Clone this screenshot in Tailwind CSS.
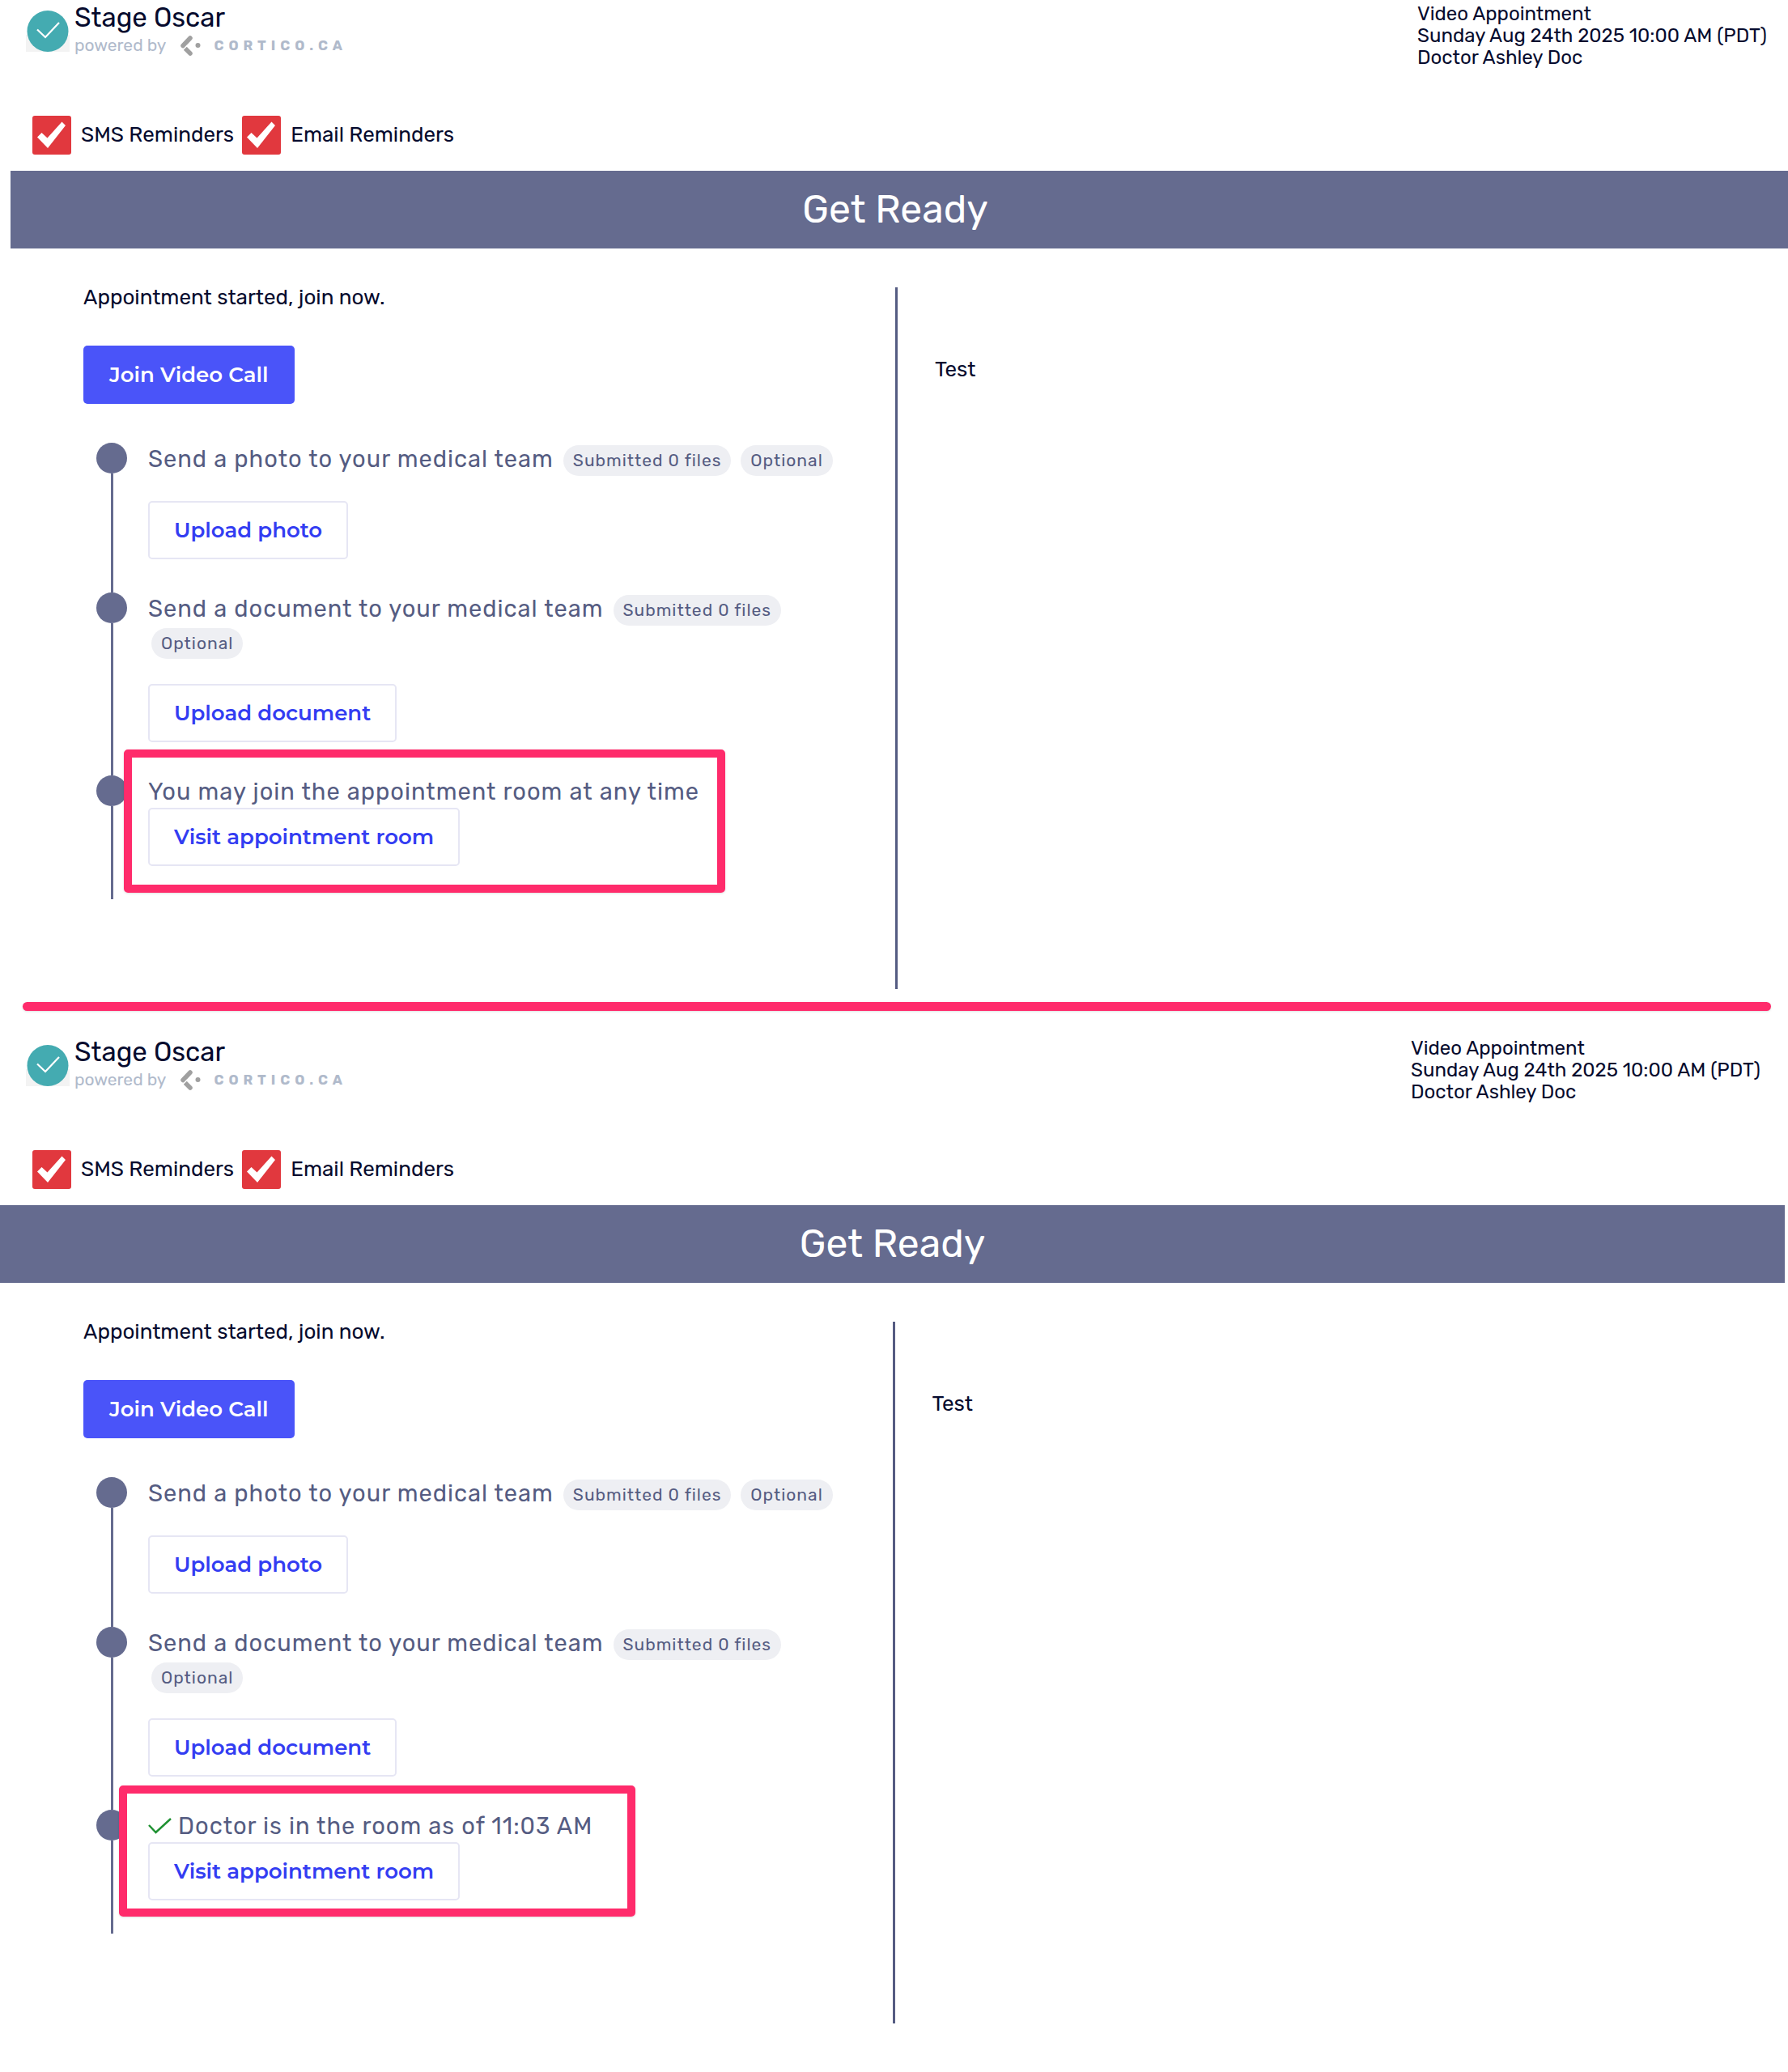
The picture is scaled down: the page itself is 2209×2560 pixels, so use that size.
<!DOCTYPE html>
<html lang="en">
<head>
  <meta charset="utf-8">
  <title>Video Appointment</title>
  <meta name="viewport" content="width=device-width, initial-scale=1">
  <script src="https://cdn.jsdelivr.net/npm/@tailwindcss/browser@4"></script>
</head>
<body class="bg-white text-[#060b2e] text-[26px] leading-[26px] font-[Rubik,Roboto,sans-serif]">

  <!-- before the doctor joins -->
  <section class="pl-[3px]">
    <header class="flex justify-between items-start pl-[29px] pr-[26px]">
      <div class="flex items-start pt-0.5">
        <svg class="w-[54px] h-[51px] mt-[11px] mr-1.5" viewBox="0 0 54 51" aria-hidden="true">
          <rect y="30" width="54" height="21" fill="#f3f3f3"/>
          <circle cx="27" cy="25.500" r="25.500" fill="#44abb1"/>
          <path d="M14 23.500 L24 33 L41 15" fill="none" stroke="#fff" stroke-width="2.200"/>
        </svg>
        <div>
          <h1 class="text-[33px] leading-10">Stage Oscar</h1>
          <div class="flex items-center text-[#b0bacb] text-[21px] leading-7">
            <span>powered by</span>
            <svg class="w-[26px] h-[26px] ml-[17px] mr-4" viewBox="0 0 26 26" aria-hidden="true">
              <path d="M4 13.500 L13 4" stroke="#a0a0a0" stroke-width="5.500" stroke-linecap="round"/>
              <path d="M7.500 17.500 L13 23" stroke="#a0a0a0" stroke-width="5.500" stroke-linecap="round"/>
              <path d="M3 19.500 L10 12.500" stroke="#fff" stroke-width="1.500"/>
              <circle cx="22.500" cy="13" r="3" fill="#a0a0a0"/>
            </svg>
            <span class="text-[17px] font-bold tracking-[6px]">CORTICO.CA</span>
          </div>
        </div>
      </div>
      <div class="pt-1 text-2xl leading-[27px]">
        <p>Video Appointment</p>
        <p>Sunday Aug 24th 2025 10:00 AM (PDT)</p>
        <p>Doctor Ashley Doc</p>
      </div>
    </header>

    <div class="flex gap-2.5 mt-[58px] pl-[37px]">
      <label class="flex items-center gap-3">
        <span class="grid">
          <input type="checkbox" checked class="appearance-none size-12 rounded-[3px] bg-[#e1383e] col-start-1 row-start-1">
          <svg class="size-12 col-start-1 row-start-1 pointer-events-none" viewBox="0 0 48 48" aria-hidden="true"><path d="M6 26.500 L11.500 21 L18.500 27.500 L36.500 7.500 L41 12 L19 40 Z" fill="#fff"/></svg>
        </span>
        SMS Reminders
      </label>
      <label class="flex items-center gap-3">
        <span class="grid">
          <input type="checkbox" checked class="appearance-none size-12 rounded-[3px] bg-[#e1383e] col-start-1 row-start-1">
          <svg class="size-12 col-start-1 row-start-1 pointer-events-none" viewBox="0 0 48 48" aria-hidden="true"><path d="M6 26.500 L11.500 21 L18.500 27.500 L36.500 7.500 L41 12 L19 40 Z" fill="#fff"/></svg>
        </span>
        Email Reminders
      </label>
    </div>

    <h2 class="ml-[10px] mt-5 pr-[10px] bg-[#656b8f] text-white text-center text-[48px] leading-[96px]">Get Ready</h2>

    <div class="grid grid-cols-2 mt-12">
      <div class="pl-[100px] pr-10 pb-[111px]">
        <p>Appointment started, join now.</p>
        <button class="mt-[46px] h-[72px] px-8 rounded-[5px] bg-[#4a54f9] text-white font-[Montserrat,Inter,sans-serif] font-semibold">Join Video Call</button>
        <ul class="mt-12 pl-4 text-[#555c82]">
          <li class="flex">
            <div class="flex flex-col items-center shrink-0 w-[38px] mr-[26px]">
              <span class="size-[38px] rounded-full bg-[#656b8f]"></span>
              <span class="w-[3px] flex-1 bg-[#656b8f]"></span>
            </div>
            <div class="pb-[41px]">
              <div class="flex flex-wrap items-start gap-x-2">
                <h3 class="text-[29px] leading-10 tracking-[1px]">Send a photo to your medical team</h3>
                <span class="ml-1 mt-[3px] px-3 rounded-full bg-[#eeeff3] text-[21px] leading-[38px] tracking-[1px]">Submitted 0 files</span>
                <span class="ml-1 mt-[3px] px-3 rounded-full bg-[#eeeff3] text-[21px] leading-[38px] tracking-[1px]">Optional</span>
              </div>
              <button class="mt-[31px] h-[72px] px-[30px] rounded-[5px] border-2 border-[#e6e6f4] text-[#333df2] font-[Montserrat,Inter,sans-serif] font-semibold">Upload photo</button>
            </div>
          </li>
          <li class="flex">
            <div class="flex flex-col items-center shrink-0 w-[38px] mr-[26px]">
              <span class="size-[38px] rounded-full bg-[#656b8f]"></span>
              <span class="w-[3px] flex-1 bg-[#656b8f]"></span>
            </div>
            <div class="pb-[41px]">
              <div class="flex flex-wrap items-start gap-x-2">
                <h3 class="text-[29px] leading-10 tracking-[1px]">Send a document to your medical team</h3>
                <span class="ml-1 mt-[3px] px-3 rounded-full bg-[#eeeff3] text-[21px] leading-[38px] tracking-[1px]">Submitted 0 files</span>
                <span class="ml-1 mt-[3px] px-3 rounded-full bg-[#eeeff3] text-[21px] leading-[38px] tracking-[1px]">Optional</span>
              </div>
              <button class="mt-[31px] h-[72px] px-[30px] rounded-[5px] border-2 border-[#e6e6f4] text-[#333df2] font-[Montserrat,Inter,sans-serif] font-semibold">Upload document</button>
            </div>
          </li>
          <li class="flex relative">
            <div class="flex flex-col items-center shrink-0 w-[38px] mr-[26px]">
              <span class="size-[38px] rounded-full bg-[#656b8f]"></span>
              <span class="w-[3px] flex-1 bg-[#656b8f]"></span>
            </div>
            <div class="pb-[41px]">
              <h3 class="text-[29px] leading-10 tracking-[1px]">You may join the appointment room at any time</h3>
              <button class="h-[72px] px-[30px] rounded-[5px] border-2 border-[#e6e6f4] text-[#333df2] font-[Montserrat,Inter,sans-serif] font-semibold">Visit appointment room</button>
            </div>
            <div class="absolute -top-8 left-[34px] w-[743px] h-[177px] border-10 border-[#ff2b6b] rounded-[5px] shadow-sm pointer-events-none"></div>
          </li>
        </ul>
      </div>
      <div class="border-l-[3px] border-[#555c82] pl-[46px] pt-[89px]">
        <p>Test</p>
      </div>
    </div>
  </section>

  <hr class="h-[11px] mt-4 ml-7 mr-[21px] border-0 rounded-full bg-[#ff2b6b] shadow-sm">

  <!-- doctor already in the room -->
  <section class="mt-[29px] pr-1">
    <header class="flex justify-between items-start pl-8 pr-[30px]">
      <div class="flex items-start pt-0.5">
        <svg class="w-[54px] h-[51px] mt-[11px] mr-1.5" viewBox="0 0 54 51" aria-hidden="true">
          <rect y="30" width="54" height="21" fill="#f3f3f3"/>
          <circle cx="27" cy="25.500" r="25.500" fill="#44abb1"/>
          <path d="M14 23.500 L24 33 L41 15" fill="none" stroke="#fff" stroke-width="2.200"/>
        </svg>
        <div>
          <h1 class="text-[33px] leading-10">Stage Oscar</h1>
          <div class="flex items-center text-[#b0bacb] text-[21px] leading-7">
            <span>powered by</span>
            <svg class="w-[26px] h-[26px] ml-[17px] mr-4" viewBox="0 0 26 26" aria-hidden="true">
              <path d="M4 13.500 L13 4" stroke="#a0a0a0" stroke-width="5.500" stroke-linecap="round"/>
              <path d="M7.500 17.500 L13 23" stroke="#a0a0a0" stroke-width="5.500" stroke-linecap="round"/>
              <path d="M3 19.500 L10 12.500" stroke="#fff" stroke-width="1.500"/>
              <circle cx="22.500" cy="13" r="3" fill="#a0a0a0"/>
            </svg>
            <span class="text-[17px] font-bold tracking-[6px]">CORTICO.CA</span>
          </div>
        </div>
      </div>
      <div class="pt-1 text-2xl leading-[27px]">
        <p>Video Appointment</p>
        <p>Sunday Aug 24th 2025 10:00 AM (PDT)</p>
        <p>Doctor Ashley Doc</p>
      </div>
    </header>

    <div class="flex gap-2.5 mt-[58px] pl-10">
      <label class="flex items-center gap-3">
        <span class="grid">
          <input type="checkbox" checked class="appearance-none size-12 rounded-[3px] bg-[#e1383e] col-start-1 row-start-1">
          <svg class="size-12 col-start-1 row-start-1 pointer-events-none" viewBox="0 0 48 48" aria-hidden="true"><path d="M6 26.500 L11.500 21 L18.500 27.500 L36.500 7.500 L41 12 L19 40 Z" fill="#fff"/></svg>
        </span>
        SMS Reminders
      </label>
      <label class="flex items-center gap-3">
        <span class="grid">
          <input type="checkbox" checked class="appearance-none size-12 rounded-[3px] bg-[#e1383e] col-start-1 row-start-1">
          <svg class="size-12 col-start-1 row-start-1 pointer-events-none" viewBox="0 0 48 48" aria-hidden="true"><path d="M6 26.500 L11.500 21 L18.500 27.500 L36.500 7.500 L41 12 L19 40 Z" fill="#fff"/></svg>
        </span>
        Email Reminders
      </label>
    </div>

    <h2 class="mt-5 bg-[#656b8f] text-white text-center text-[48px] leading-[96px]">Get Ready</h2>

    <div class="grid grid-cols-2 mt-12">
      <div class="pl-[103px] pr-10 pb-[111px]">
        <p>Appointment started, join now.</p>
        <button class="mt-[46px] h-[72px] px-8 rounded-[5px] bg-[#4a54f9] text-white font-[Montserrat,Inter,sans-serif] font-semibold">Join Video Call</button>
        <ul class="mt-12 pl-4 text-[#555c82]">
          <li class="flex">
            <div class="flex flex-col items-center shrink-0 w-[38px] mr-[26px]">
              <span class="size-[38px] rounded-full bg-[#656b8f]"></span>
              <span class="w-[3px] flex-1 bg-[#656b8f]"></span>
            </div>
            <div class="pb-[41px]">
              <div class="flex flex-wrap items-start gap-x-2">
                <h3 class="text-[29px] leading-10 tracking-[1px]">Send a photo to your medical team</h3>
                <span class="ml-1 mt-[3px] px-3 rounded-full bg-[#eeeff3] text-[21px] leading-[38px] tracking-[1px]">Submitted 0 files</span>
                <span class="ml-1 mt-[3px] px-3 rounded-full bg-[#eeeff3] text-[21px] leading-[38px] tracking-[1px]">Optional</span>
              </div>
              <button class="mt-[31px] h-[72px] px-[30px] rounded-[5px] border-2 border-[#e6e6f4] text-[#333df2] font-[Montserrat,Inter,sans-serif] font-semibold">Upload photo</button>
            </div>
          </li>
          <li class="flex">
            <div class="flex flex-col items-center shrink-0 w-[38px] mr-[26px]">
              <span class="size-[38px] rounded-full bg-[#656b8f]"></span>
              <span class="w-[3px] flex-1 bg-[#656b8f]"></span>
            </div>
            <div class="pb-[41px]">
              <div class="flex flex-wrap items-start gap-x-2">
                <h3 class="text-[29px] leading-10 tracking-[1px]">Send a document to your medical team</h3>
                <span class="ml-1 mt-[3px] px-3 rounded-full bg-[#eeeff3] text-[21px] leading-[38px] tracking-[1px]">Submitted 0 files</span>
                <span class="ml-1 mt-[3px] px-3 rounded-full bg-[#eeeff3] text-[21px] leading-[38px] tracking-[1px]">Optional</span>
              </div>
              <button class="mt-[31px] h-[72px] px-[30px] rounded-[5px] border-2 border-[#e6e6f4] text-[#333df2] font-[Montserrat,Inter,sans-serif] font-semibold">Upload document</button>
            </div>
          </li>
          <li class="flex relative">
            <div class="flex flex-col items-center shrink-0 w-[38px] mr-[26px]">
              <span class="size-[38px] rounded-full bg-[#656b8f]"></span>
              <span class="w-[3px] flex-1 bg-[#656b8f]"></span>
            </div>
            <div class="pb-[41px]">
              <h3 class="flex items-center gap-2 text-[29px] leading-10 tracking-[1px]">
                <svg class="w-[29px] h-5" viewBox="0 0 29 20" aria-hidden="true"><path d="M1 9 L9.500 18 L28 1" fill="none" stroke="#1f9132" stroke-width="2.500"/></svg>
                Doctor is in the room as of 11:03 AM
              </h3>
              <button class="h-[72px] px-[30px] rounded-[5px] border-2 border-[#e6e6f4] text-[#333df2] font-[Montserrat,Inter,sans-serif] font-semibold">Visit appointment room</button>
            </div>
            <div class="absolute -top-[30px] left-[28px] w-[638px] h-[162px] border-10 border-[#ff2b6b] rounded-[5px] shadow-sm pointer-events-none"></div>
          </li>
        </ul>
      </div>
      <div class="border-l-[3px] border-[#555c82] pl-[46px] pt-[89px]">
        <p>Test</p>
      </div>
    </div>
  </section>

</body>
</html>
